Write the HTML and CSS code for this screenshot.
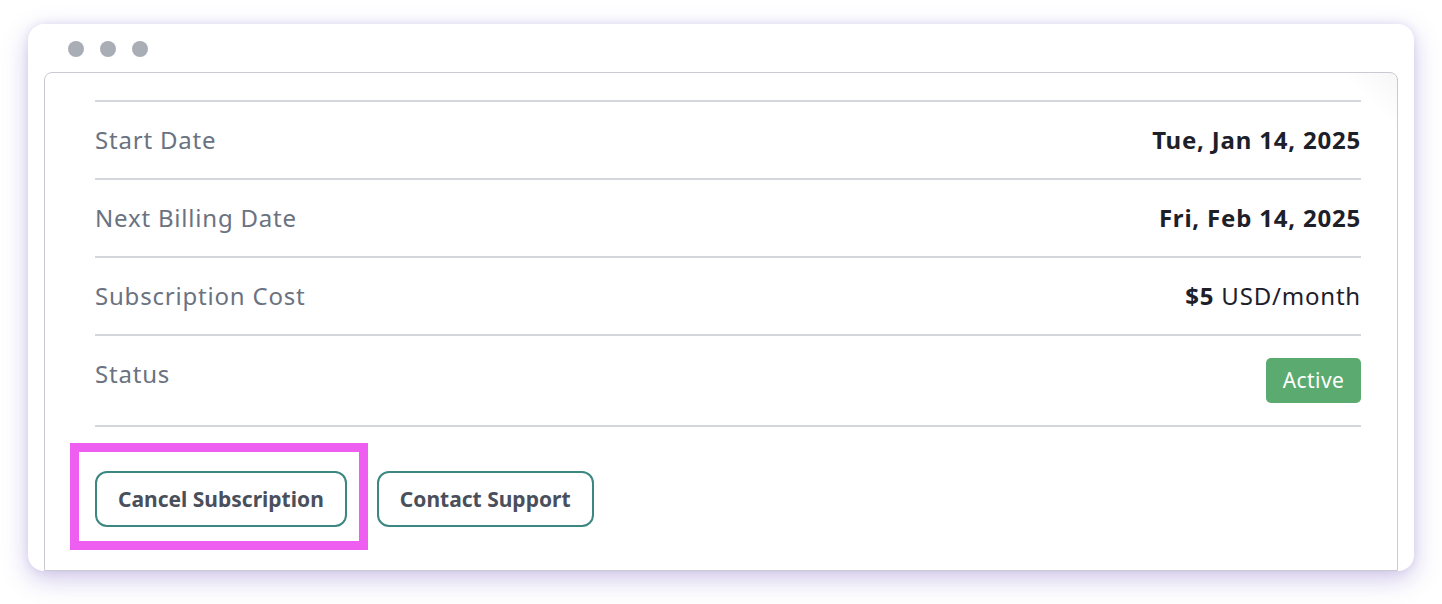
FILE: index.html
```html
<!DOCTYPE html>
<html lang="en">
<head>
<meta charset="utf-8">
<title>Subscription</title>
<link rel="stylesheet" href="styles.css">
</head>
<body>
<div class="window">
  <div class="titlebar">
    <span class="dot"></span><span class="dot"></span><span class="dot"></span>
  </div>
  <div class="frame">
    <div class="details">
      <div class="row">
        <span class="label">Start Date</span>
        <span class="value strong">Tue, Jan 14, 2025</span>
      </div>
      <div class="row">
        <span class="label">Next Billing Date</span>
        <span class="value strong">Fri, Feb 14, 2025</span>
      </div>
      <div class="row">
        <span class="label">Subscription Cost</span>
        <span class="value"><b class="amount">$5</b> USD/month</span>
      </div>
      <div class="row row-status">
        <span class="label">Status</span>
        <span class="badge">Active</span>
      </div>
    </div>
    <div class="actions">
      <div class="highlighted">
        <button class="btn" type="button">Cancel Subscription</button>
        <span class="highlight"></span>
      </div>
      <button class="btn" type="button">Contact Support</button>
    </div>
  </div>
</div>
</body>
</html>
```

FILE: styles.css
```css
* { box-sizing: border-box; }

html, body {
  margin: 0;
  padding: 0;
  background: #ffffff;
}

body {
  font-family: "Noto Sans", "Open Sans", sans-serif;
  padding: 24px 28px 33px 28px;
}

.window {
  width: 1386px;
  height: 547px;
  background: #ffffff;
  border-radius: 16px;
  box-shadow: 0 8px 26px rgba(110, 85, 190, 0.32), 0 0 8px rgba(110, 85, 190, 0.12);
  overflow: hidden;
  display: flex;
  flex-direction: column;
}

.titlebar {
  height: 48px;
  flex: none;
  display: flex;
  align-items: center;
  gap: 16px;
  padding: 2px 0 0 40px;
}

.dot {
  width: 16px;
  height: 16px;
  border-radius: 50%;
  background: #a9adb6;
}

.frame {
  flex: 1;
  margin: 0 16px;
  border: 1px solid #c8cbd1;
  border-radius: 8px 8px 0 0;
  padding: 27px 36px 0 50px;
  background: linear-gradient(225deg, rgba(0,0,0,0.035) 0, rgba(0,0,0,0) 40px);
}

.details {
  border-bottom: 2px solid #d3d6db;
}

.row {
  display: flex;
  justify-content: space-between;
  align-items: center;
  border-top: 2px solid #d3d6db;
  padding: 22px 0;
  line-height: 32px;
  font-size: 24px;
  letter-spacing: 0.8px;
}

.row-status {
  align-items: flex-start;
}

.label {
  color: #6b7280;
}

.value {
  color: #1d2029;
}

.value.strong,
.amount {
  font-weight: 700;
}

.badge {
  display: inline-flex;
  align-items: center;
  justify-content: center;
  width: 95px;
  height: 45px;
  background: #5bab70;
  color: #ffffff;
  border-radius: 5px;
  font-size: 21px;
  letter-spacing: 0.4px;
  line-height: 1;
}

.actions {
  display: flex;
  gap: 30px;
  margin-top: 44px;
}

.highlighted {
  position: relative;
}

.btn {
  height: 56px;
  padding: 0 21px;
  background: #ffffff;
  border: 2px solid #3c8782;
  border-radius: 12px;
  font-family: inherit;
  font-size: 21px;
  font-weight: 700;
  color: #4a4f5c;
  cursor: pointer;
}

.highlighted .btn {
  display: block;
}

.highlight {
  position: absolute;
  top: -28px;
  left: -25px;
  right: -21px;
  bottom: -23px;
  border: 9px solid #ee5ef1;
  pointer-events: none;
}
```
